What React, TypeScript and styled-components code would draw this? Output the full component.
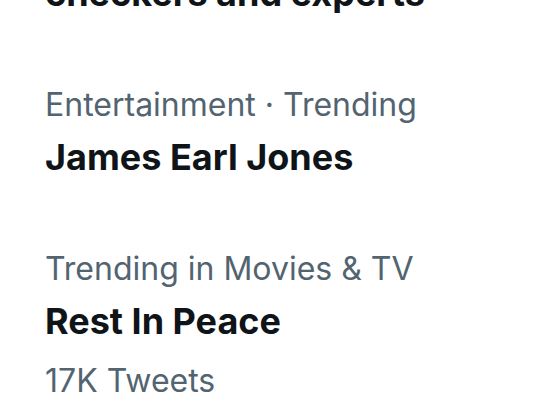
import React from 'react';
import styled, { createGlobalStyle } from 'styled-components';

const GlobalStyle = createGlobalStyle`
  html, body {
    margin: 0;
    padding: 0;
    background: #ffffff;
  }
  body {
    font-family: Inter, "Noto Sans", "Liberation Sans", sans-serif;
    -webkit-font-smoothing: antialiased;
  }
`;

type Trend = {
  category: string;
  title: string;
  count?: string;
};

const trends: Trend[] = [
  { category: 'Trending in United States', title: 'checkers and experts' },
  { category: 'Entertainment · Trending', title: 'James Earl Jones' },
  { category: 'Trending in Movies & TV', title: 'Rest In Peace', count: '17K Tweets' },
];

const Viewport = styled.div`
  width: 546px;
  height: 416px;
  overflow: hidden;
`;

// list is scrolled so the previous trend is mostly out of view
const List = styled.div`
  display: flex;
  flex-direction: column;
  margin-top: -113px;
`;

const Item = styled.div`
  display: flex;
  flex-direction: column;
  padding: 33px 45px;
`;

const Category = styled.div`
  font-size: 32px;
  line-height: 42px;
  color: #536471;
  white-space: nowrap;
`;

const Title = styled.div`
  margin-top: 6px;
  font-size: 36px;
  line-height: 50px;
  font-weight: 700;
  color: #0f1419;
  white-space: nowrap;
`;

const Count = styled.div`
  margin-top: 14px;
  font-size: 32px;
  line-height: 42px;
  color: #536471;
`;

const App = () => {
  return (
    <Viewport>
      <GlobalStyle />
      <List>
        {trends.map((t) => (
          <Item key={t.title}>
            <Category>{t.category}</Category>
            <Title>{t.title}</Title>
            {t.count && <Count>{t.count}</Count>}
          </Item>
        ))}
      </List>
    </Viewport>
  );
};

export default App;
